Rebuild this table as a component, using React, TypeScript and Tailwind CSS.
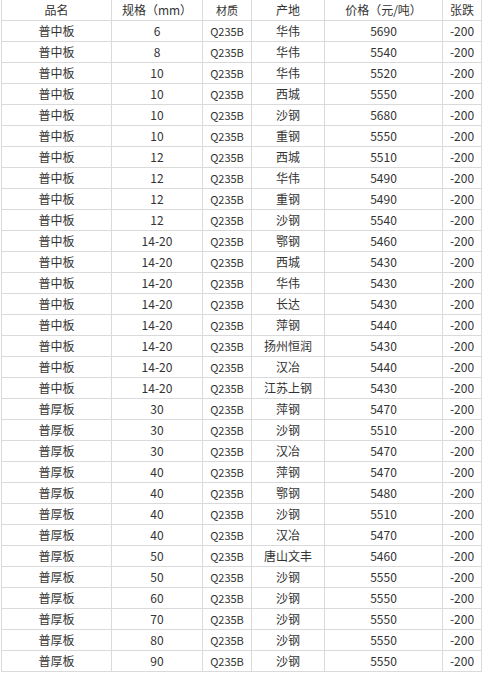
const rows: [string, string, string, string, string, string][] = [
  ["普中板", "6", "Q235B", "华伟", "5690", "-200"],
  ["普中板", "8", "Q235B", "华伟", "5540", "-200"],
  ["普中板", "10", "Q235B", "华伟", "5520", "-200"],
  ["普中板", "10", "Q235B", "西城", "5550", "-200"],
  ["普中板", "10", "Q235B", "沙钢", "5680", "-200"],
  ["普中板", "10", "Q235B", "重钢", "5550", "-200"],
  ["普中板", "12", "Q235B", "西城", "5510", "-200"],
  ["普中板", "12", "Q235B", "华伟", "5490", "-200"],
  ["普中板", "12", "Q235B", "重钢", "5490", "-200"],
  ["普中板", "12", "Q235B", "沙钢", "5540", "-200"],
  ["普中板", "14-20", "Q235B", "鄂钢", "5460", "-200"],
  ["普中板", "14-20", "Q235B", "西城", "5430", "-200"],
  ["普中板", "14-20", "Q235B", "华伟", "5430", "-200"],
  ["普中板", "14-20", "Q235B", "长达", "5430", "-200"],
  ["普中板", "14-20", "Q235B", "萍钢", "5440", "-200"],
  ["普中板", "14-20", "Q235B", "扬州恒润", "5430", "-200"],
  ["普中板", "14-20", "Q235B", "汉冶", "5440", "-200"],
  ["普中板", "14-20", "Q235B", "江苏上钢", "5430", "-200"],
  ["普厚板", "30", "Q235B", "萍钢", "5470", "-200"],
  ["普厚板", "30", "Q235B", "沙钢", "5510", "-200"],
  ["普厚板", "30", "Q235B", "汉冶", "5470", "-200"],
  ["普厚板", "40", "Q235B", "萍钢", "5470", "-200"],
  ["普厚板", "40", "Q235B", "鄂钢", "5480", "-200"],
  ["普厚板", "40", "Q235B", "沙钢", "5510", "-200"],
  ["普厚板", "40", "Q235B", "汉冶", "5470", "-200"],
  ["普厚板", "50", "Q235B", "唐山文丰", "5460", "-200"],
  ["普厚板", "50", "Q235B", "沙钢", "5550", "-200"],
  ["普厚板", "60", "Q235B", "沙钢", "5550", "-200"],
  ["普厚板", "70", "Q235B", "沙钢", "5550", "-200"],
  ["普厚板", "80", "Q235B", "沙钢", "5550", "-200"],
  ["普厚板", "90", "Q235B", "沙钢", "5550", "-200"],
];

const header = ["品名", "规格（mm）", "材质", "产地", "价格（元/吨）", "张跌"];

const Row = ({ cells }: { cells: string[] }) => (
  <div className="grid grid-cols-[111px_91px_49px_73px_118px_39px]">
    {cells.map((c, i) => (
      <div
        key={i}
        className={`h-[21px] border-b border-r border-[#dadada] flex items-center justify-center whitespace-nowrap ${
          i === 0 ? "border-l" : ""
        } ${i === 2 ? "text-[11px]" : ""}`}
      >
        {c}
      </div>
    ))}
  </div>
);

export default function App() {
  return (
    <div
      className="bg-white text-[#333333] text-[12px] leading-none pl-px"
      style={{ fontFamily: '"Noto Sans CJK SC", "Liberation Sans", sans-serif' }}
    >
      <Row cells={header} />
      {rows.map((r, i) => (
        <Row key={i} cells={r} />
      ))}
    </div>
  );
}
